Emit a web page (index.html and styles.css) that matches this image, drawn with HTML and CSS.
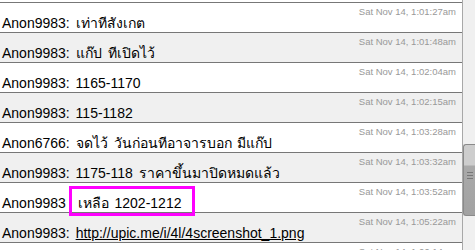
FILE: index.html
```html
<!DOCTYPE html>
<html lang="th">
<head>
<meta charset="UTF-8">
<title>Chat log</title>
<link rel="stylesheet" href="styles.css">
</head>
<body>

<div class="frame">
  <div class="log">
    <div class="row-cut"></div>

    <div class="row">
      <div class="time">Sat Nov 14, 1:01:27am</div>
      <div class="msg">Anon9983: เท่าทีสังเกต</div>
    </div>
    <div class="row alt">
      <div class="time">Sat Nov 14, 1:01:48am</div>
      <div class="msg">Anon9983: แก๊ป ทีเปิดไว้</div>
    </div>
    <div class="row">
      <div class="time">Sat Nov 14, 1:02:04am</div>
      <div class="msg">Anon9983: 1165-1170</div>
    </div>
    <div class="row alt">
      <div class="time">Sat Nov 14, 1:02:15am</div>
      <div class="msg">Anon9983: 115-1182</div>
    </div>
    <div class="row">
      <div class="time">Sat Nov 14, 1:03:28am</div>
      <div class="msg">Anon6766: จดไว้ วันก่อนทีอาจารบอก มีแก๊ป</div>
    </div>
    <div class="row alt">
      <div class="time">Sat Nov 14, 1:03:32am</div>
      <div class="msg">Anon9983: 1175-118 ราคาขึ้นมาปิดหมดแล้ว</div>
    </div>
    <div class="row">
      <div class="time">Sat Nov 14, 1:03:52am</div>
      <div class="msg">Anon9983 &nbsp;เหลือ 1202-1212</div>
    </div>
    <div class="row alt">
      <div class="time">Sat Nov 14, 1:05:22am</div>
      <div class="msg">Anon9983: <a href="#">http://upic.me/i/4l/4screenshot_1.png</a></div>
    </div>
    <div class="row">
      <div class="time">Sat Nov 14, 1:06:14am</div>
      <div class="msg">&nbsp;</div>
    </div>

    <div class="mark"></div>
  </div>

  <div class="scrollbar">
    <div class="thumb">
      <span class="grip"></span>
    </div>
  </div>
</div>

</body>
</html>
```

FILE: styles.css
```css
body {
  margin: 0;
  padding: 0;
  background-color: #fff;
  font-family: "Liberation Sans", "DejaVu Sans", sans-serif;
}
.frame {
  width: 475px;
  height: 250px;
  overflow: hidden;
  display: flex;
}
.log {
  position: relative;
  width: 462px;
  flex: none;
}
.row-cut {
  height: 2px;
  background-color: #fff;
}
.row {
  border-top: 1px solid #777;
  height: 29px;
  background-color: #fff;
  padding: 0 6px 0 2px;
}
.row.alt {
  background-color: #f0f0f0;
}
.time {
  padding-top: 3px;
  font-size: 9.5px;
  line-height: 12px;
  color: #999;
  text-align: right;
}
.msg {
  margin-top: -3px;
  font-size: 14px;
  line-height: 16px;
  word-spacing: 2px;
  color: #000;
  white-space: nowrap;
}
.msg a {
  color: #000;
  text-decoration: underline;
}
.mark {
  position: absolute;
  left: 69px;
  top: 186px;
  width: 120px;
  height: 24px;
  border: 3px solid #f0f;
}
.scrollbar {
  flex: none;
  width: 12px;
  border-left: 1px solid #a8a8a8;
  background-color: #f0f0f0;
  padding-top: 144px;
}
.thumb {
  height: 72px;
  border: 1px solid #8a8a8a;
  border-right: none;
  border-radius: 3px 0 0 3px;
  background: linear-gradient(#cdcdcd 0, #cdcdcd 20px, #a9a9a9 21px, #a2a2a2 100%);
  display: flex;
  justify-content: center;
  padding-top: 27px;
  box-sizing: border-box;
}
.grip {
  width: 6px;
  height: 5px;
  border-top: 1px solid #777;
  border-bottom: 1px solid #777;
  position: relative;
}
.grip::after {
  content: "";
  position: absolute;
  left: 0;
  right: 0;
  top: 2px;
  border-top: 1px solid #777;
}
```
